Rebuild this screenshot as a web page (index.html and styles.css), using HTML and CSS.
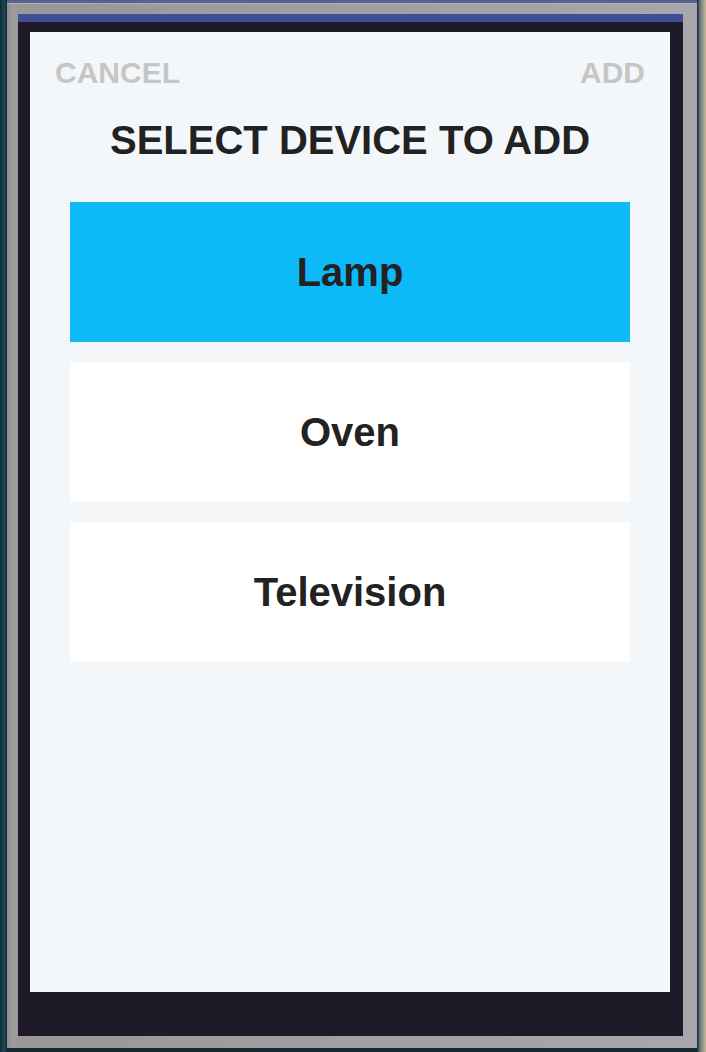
FILE: index.html
```html
<!DOCTYPE html>
<html>
<head>
<meta charset="utf-8">
<link rel="stylesheet" href="styles.css">
</head>
<body>
<div class="frame">
  <div class="bezel">
    <div class="screen">
      <div class="topbar">
        <span class="action">CANCEL</span>
        <span class="action">ADD</span>
      </div>
      <h1 class="title">SELECT DEVICE TO ADD</h1>
      <div class="list">
        <div class="item selected">Lamp</div>
        <div class="item">Oven</div>
        <div class="item">Television</div>
      </div>
    </div>
  </div>
</div>
</body>
</html>
```
FILE: styles.css
```css
html, body {
  margin: 0;
  padding: 0;
}
body {
  width: 706px;
  height: 1052px;
  box-sizing: border-box;
  padding: 3px 9px 4px 7px;
  background: linear-gradient(90deg, #0f2a33 0, #1d4a55 4px, #132a30 7px, #132a30 697px, #6a7880 700px, #c8b898 706px);
  overflow: hidden;
  font-family: "Liberation Sans", Arial, sans-serif;
}
.frame {
  background: linear-gradient(90deg, #8f8a8c 0, #a29d9f 6px, #9b9698 11px, #a9a7ab 100%);
  padding: 11px 14px 12px 11px;
  box-shadow: inset 0 1px 0 #b0acc4, 0 -3px 0 #56648a;
}
.bezel {
  background: #1f1a28;
  border-top: 8px solid #3f4f96;
  padding: 10px 13px 44px 12px;
}
.screen {
  width: 640px;
  height: 960px;
  background: #f3f7fa;
  box-sizing: border-box;
  padding-top: 26px;
}
.topbar {
  display: flex;
  justify-content: space-between;
  padding: 0 25px;
}
.action {
  font-size: 30px;
  line-height: 30px;
  font-weight: bold;
  color: #c6c6c6;
}
.title {
  margin: 32px 0 0;
  font-size: 40px;
  line-height: 40px;
  font-weight: bold;
  color: #222222;
  text-align: center;
}
.list {
  margin: 42px 40px 0;
  display: flex;
  flex-direction: column;
  gap: 20px;
}
.item {
  height: 140px;
  background: #ffffff;
  display: flex;
  align-items: center;
  justify-content: center;
  font-size: 40px;
  font-weight: bold;
  color: #222222;
}
.item.selected {
  background: #0db9f6;
}
```
